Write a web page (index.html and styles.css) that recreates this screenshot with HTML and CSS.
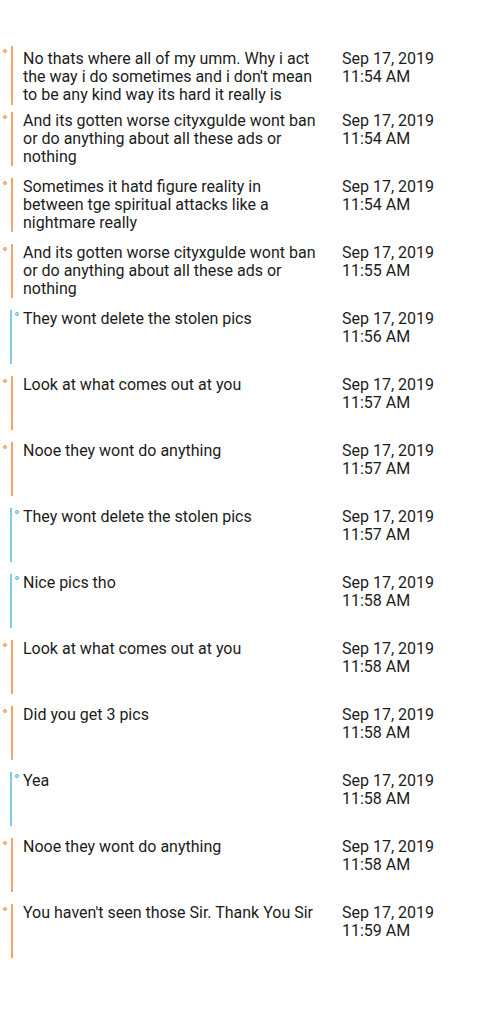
FILE: index.html
```html
<!DOCTYPE html>
<html>
<head>
<meta charset="utf-8">
<link rel="stylesheet" href="styles.css">
</head>
<body>
<div class="list">
  <div class="row out first"><div class="mark"><span class="dot"></span><span class="bar"></span></div><div class="msg">No thats where all of my umm. Why i act the way i do sometimes and i don't mean to be any kind way its hard it really is</div><div class="date">Sep 17, 2019<br>11:54 AM</div></div>
  <div class="row out"><div class="mark"><span class="dot"></span><span class="bar"></span></div><div class="msg">And its gotten worse cityxgulde wont ban or do anything about all these ads or nothing</div><div class="date">Sep 17, 2019<br>11:54 AM</div></div>
  <div class="row out"><div class="mark"><span class="dot"></span><span class="bar"></span></div><div class="msg">Sometimes it hatd figure reality in between tge spiritual attacks like a nightmare really</div><div class="date">Sep 17, 2019<br>11:54 AM</div></div>
  <div class="row out"><div class="mark"><span class="dot"></span><span class="bar"></span></div><div class="msg">And its gotten worse cityxgulde wont ban or do anything about all these ads or nothing</div><div class="date">Sep 17, 2019<br>11:55 AM</div></div>
  <div class="row in"><div class="mark"><span class="bar"></span><span class="dot"></span></div><div class="msg">They wont delete the stolen pics</div><div class="date">Sep 17, 2019<br>11:56 AM</div></div>
  <div class="row out"><div class="mark"><span class="dot"></span><span class="bar"></span></div><div class="msg">Look at what comes out at you</div><div class="date">Sep 17, 2019<br>11:57 AM</div></div>
  <div class="row out"><div class="mark"><span class="dot"></span><span class="bar"></span></div><div class="msg">Nooe they wont do anything</div><div class="date">Sep 17, 2019<br>11:57 AM</div></div>
  <div class="row in"><div class="mark"><span class="bar"></span><span class="dot"></span></div><div class="msg">They wont delete the stolen pics</div><div class="date">Sep 17, 2019<br>11:57 AM</div></div>
  <div class="row in"><div class="mark"><span class="bar"></span><span class="dot"></span></div><div class="msg">Nice pics tho</div><div class="date">Sep 17, 2019<br>11:58 AM</div></div>
  <div class="row out"><div class="mark"><span class="dot"></span><span class="bar"></span></div><div class="msg">Look at what comes out at you</div><div class="date">Sep 17, 2019<br>11:58 AM</div></div>
  <div class="row out"><div class="mark"><span class="dot"></span><span class="bar"></span></div><div class="msg">Did you get 3 pics</div><div class="date">Sep 17, 2019<br>11:58 AM</div></div>
  <div class="row in"><div class="mark"><span class="bar"></span><span class="dot"></span></div><div class="msg">Yea</div><div class="date">Sep 17, 2019<br>11:58 AM</div></div>
  <div class="row out"><div class="mark"><span class="dot"></span><span class="bar"></span></div><div class="msg">Nooe they wont do anything</div><div class="date">Sep 17, 2019<br>11:58 AM</div></div>
  <div class="row out"><div class="mark"><span class="dot"></span><span class="bar"></span></div><div class="msg">You haven't seen those Sir. Thank You Sir</div><div class="date">Sep 17, 2019<br>11:59 AM</div></div>
</div>
</body>
</html>
```

FILE: styles.css
```css
html, body {
  margin: 0;
  padding: 0;
  background: #ffffff;
}
body {
  font-family: Roboto, "Liberation Sans", sans-serif;
  font-size: 16px;
  line-height: 18px;
  color: #1c1c1c;
}
.list {
  display: flex;
  flex-direction: column;
  padding: 46px 0 0 0;
}
.row {
  display: flex;
  align-items: stretch;
  min-height: 54px;
  margin-bottom: 12px;
}
.row.first {
  margin-bottom: 7px;
}
.row.first .msg,
.row.first .date {
  padding-top: 4px;
  padding-bottom: 1px;
}
.mark {
  width: 23px;
  flex: 0 0 23px;
  display: flex;
  align-items: flex-start;
}
.bar {
  width: 2px;
  align-self: stretch;
}
.dot {
  width: 4px;
  height: 4px;
  border-radius: 50%;
  box-sizing: border-box;
}
.out .dot {
  margin: 3px 4px 0 3px;
  background: #f8c79c;
  border: 1.2px solid #f3994f;
}
.out .bar {
  background: #f6a364;
}
.in .bar {
  margin-left: 10px;
  background: #7fcaef;
}
.in .dot {
  margin: 2px 0 0 3px;
  background: #d4eefb;
  border: 1.2px solid #52b4e6;
}
.msg {
  width: 300px;
  flex: 0 0 300px;
}
.date {
  margin-left: 19px;
}
```
